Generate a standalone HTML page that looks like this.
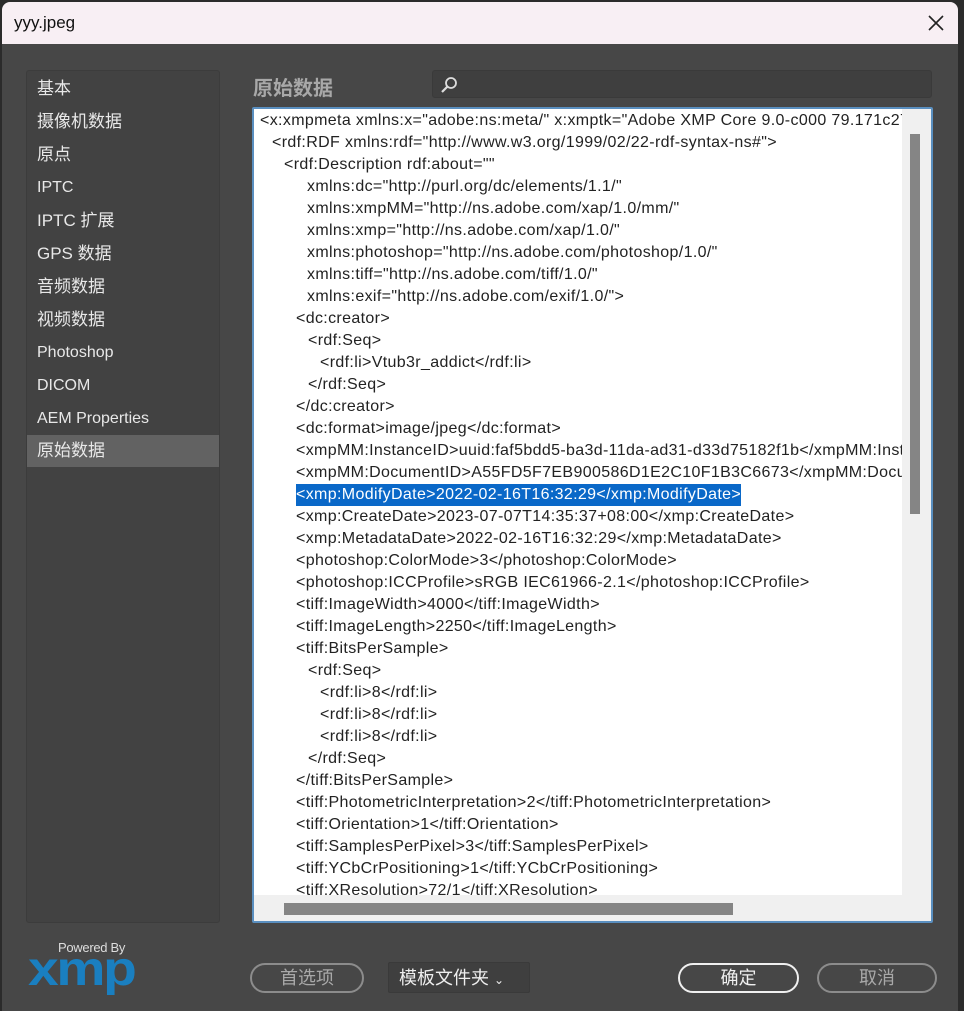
<!DOCTYPE html>
<html><head><meta charset="utf-8"><style>
*{margin:0;padding:0;box-sizing:border-box}
body{width:964px;height:1011px;background:#2b2b2b;font-family:"Liberation Sans","Noto Sans CJK SC",sans-serif;overflow:hidden;position:relative}
.win{position:absolute;left:2px;top:2px;width:956px;height:1009px;background:#474747;border-radius:8px 8px 0 0;overflow:hidden}
.title{position:absolute;left:0;top:0;width:956px;height:42px;background:#f8eff4;}
.title span{position:absolute;left:12px;top:11px;font-size:17px;color:#111}
.close{position:absolute;right:12px;top:11px;width:20px;height:20px}
.side{position:absolute;left:24px;top:68px;width:194px;height:853px;background:#424242;border:1px solid #3c3c3c;border-radius:3px}
.side div{position:absolute;left:0;width:192px;height:32px;line-height:32px;padding-left:10px;color:#e8e8e8;font-size:17px}
.side div.s{font-size:16px}
.side div.sel{background:#626262}
.hd{position:absolute;left:251px;top:70px;font-size:20px;color:#a8a8a8;font-weight:bold}
.search{position:absolute;left:430px;top:68px;width:500px;height:28px;background:#3f3f3f;border:1px solid #3a3a3a;border-radius:3px}
.ta{position:absolute;left:250px;top:105px;width:681px;height:816px;background:#f0f0f0;border:2px solid #5a8fc0;border-radius:2px;overflow:hidden}
.code{position:absolute;left:0;top:0;width:648px;height:786px;background:#fff;overflow:hidden}
.code p{position:absolute;white-space:pre;font-size:16px;letter-spacing:0.35px;color:#222;line-height:22px;height:22px}
.hl{background:#0a68c8;color:#fff!important}
.vs{position:absolute;left:656px;top:25px;width:10px;height:380px;background:#858585}
.hs{position:absolute;left:30px;top:794px;width:449px;height:12px;background:#858585}
.btn{position:absolute;top:961px;height:30px;border:2px solid #8c8c8c;border-radius:15px;color:#a8a8a8;font-size:18px;text-align:center;line-height:26px}
</style></head><body>
<div class="win">
<div class="title"><span>yyy.jpeg</span>
<svg class="close" viewBox="0 0 20 20"><path d="M3 3L17 17M17 3L3 17" stroke="#222" stroke-width="1.6"/></svg></div>
<div class="side">
<div style="top:2px">基本</div>
<div style="top:35px">摄像机数据</div>
<div style="top:68px">原点</div>
<div class="s" style="top:101px">IPTC</div>
<div style="top:134px">IPTC 扩展</div>
<div style="top:167px">GPS 数据</div>
<div style="top:200px">音频数据</div>
<div style="top:233px">视频数据</div>
<div class="s" style="top:266px">Photoshop</div>
<div class="s" style="top:299px">DICOM</div>
<div class="s" style="top:332px">AEM Properties</div>
<div class="sel" style="top:364px">原始数据</div>
</div>
<div class="hd">原始数据</div>
<div class="search"><svg style="position:absolute;left:6px;top:4px" width="20" height="20" viewBox="0 0 20 20"><circle cx="12" cy="8" r="5" fill="none" stroke="#ddd" stroke-width="1.8"/><path d="M8.5 11.5L3 17" stroke="#ddd" stroke-width="2.2"/></svg></div>
<div class="ta"><div class="code">
<p style="left:6px;top:1px">&lt;x:xmpmeta xmlns:x="adobe:ns:meta/" x:xmptk="Adobe XMP Core 9.0-c000 79.171c27f, 2022/08/16-18:02:43"&gt;</p>
<p style="left:18px;top:23px">&lt;rdf:RDF xmlns:rdf="http://www.w3.org/1999/02/22-rdf-syntax-ns#"&gt;</p>
<p style="left:30px;top:45px">&lt;rdf:Description rdf:about=""</p>
<p style="left:53px;top:67px">xmlns:dc="http://purl.org/dc/elements/1.1/"</p>
<p style="left:53px;top:89px">xmlns:xmpMM="http://ns.adobe.com/xap/1.0/mm/"</p>
<p style="left:53px;top:111px">xmlns:xmp="http://ns.adobe.com/xap/1.0/"</p>
<p style="left:53px;top:133px">xmlns:photoshop="http://ns.adobe.com/photoshop/1.0/"</p>
<p style="left:53px;top:155px">xmlns:tiff="http://ns.adobe.com/tiff/1.0/"</p>
<p style="left:53px;top:177px">xmlns:exif="http://ns.adobe.com/exif/1.0/"&gt;</p>
<p style="left:42px;top:199px">&lt;dc:creator&gt;</p>
<p style="left:54px;top:221px">&lt;rdf:Seq&gt;</p>
<p style="left:66px;top:243px">&lt;rdf:li&gt;Vtub3r_addict&lt;/rdf:li&gt;</p>
<p style="left:54px;top:265px">&lt;/rdf:Seq&gt;</p>
<p style="left:42px;top:287px">&lt;/dc:creator&gt;</p>
<p style="left:42px;top:309px">&lt;dc:format&gt;image/jpeg&lt;/dc:format&gt;</p>
<p style="left:42px;top:331px">&lt;xmpMM:InstanceID&gt;uuid:faf5bdd5-ba3d-11da-ad31-d33d75182f1b&lt;/xmpMM:InstanceID&gt;</p>
<p style="left:42px;top:353px">&lt;xmpMM:DocumentID&gt;A55FD5F7EB900586D1E2C10F1B3C6673&lt;/xmpMM:DocumentID&gt;</p>
<p class="hl" style="left:42px;top:375px">&lt;xmp:ModifyDate&gt;2022-02-16T16:32:29&lt;/xmp:ModifyDate&gt;</p>
<p style="left:42px;top:397px">&lt;xmp:CreateDate&gt;2023-07-07T14:35:37+08:00&lt;/xmp:CreateDate&gt;</p>
<p style="left:42px;top:419px">&lt;xmp:MetadataDate&gt;2022-02-16T16:32:29&lt;/xmp:MetadataDate&gt;</p>
<p style="left:42px;top:441px">&lt;photoshop:ColorMode&gt;3&lt;/photoshop:ColorMode&gt;</p>
<p style="left:42px;top:463px">&lt;photoshop:ICCProfile&gt;sRGB IEC61966-2.1&lt;/photoshop:ICCProfile&gt;</p>
<p style="left:42px;top:485px">&lt;tiff:ImageWidth&gt;4000&lt;/tiff:ImageWidth&gt;</p>
<p style="left:42px;top:507px">&lt;tiff:ImageLength&gt;2250&lt;/tiff:ImageLength&gt;</p>
<p style="left:42px;top:529px">&lt;tiff:BitsPerSample&gt;</p>
<p style="left:54px;top:551px">&lt;rdf:Seq&gt;</p>
<p style="left:66px;top:573px">&lt;rdf:li&gt;8&lt;/rdf:li&gt;</p>
<p style="left:66px;top:595px">&lt;rdf:li&gt;8&lt;/rdf:li&gt;</p>
<p style="left:66px;top:617px">&lt;rdf:li&gt;8&lt;/rdf:li&gt;</p>
<p style="left:54px;top:639px">&lt;/rdf:Seq&gt;</p>
<p style="left:42px;top:661px">&lt;/tiff:BitsPerSample&gt;</p>
<p style="left:42px;top:683px">&lt;tiff:PhotometricInterpretation&gt;2&lt;/tiff:PhotometricInterpretation&gt;</p>
<p style="left:42px;top:705px">&lt;tiff:Orientation&gt;1&lt;/tiff:Orientation&gt;</p>
<p style="left:42px;top:727px">&lt;tiff:SamplesPerPixel&gt;3&lt;/tiff:SamplesPerPixel&gt;</p>
<p style="left:42px;top:749px">&lt;tiff:YCbCrPositioning&gt;1&lt;/tiff:YCbCrPositioning&gt;</p>
<p style="left:42px;top:771px">&lt;tiff:XResolution&gt;72/1&lt;/tiff:XResolution&gt;</p>
</div>
<div class="vs"></div><div class="hs"></div>
</div>
<div style="position:absolute;left:56px;top:938px;font-size:13px;color:#ddd;letter-spacing:-0.3px">Powered By</div>
<div style="position:absolute;left:26px;top:940px;font-size:48px;font-weight:bold;color:#1a7fc0;letter-spacing:-2px;transform:scaleX(1.15);transform-origin:left">xmp</div>
<div class="btn" style="left:248px;width:114px">首选项</div>
<div style="position:absolute;left:386px;top:960px;width:142px;height:31px;background:#3f3f3f;border:1px solid #3a3a3a;border-radius:2px;color:#eee;font-size:18px;line-height:30px;padding-left:10px">模板文件夹 <span style="font-size:12px">&#8964;</span></div>
<div class="btn" style="left:676px;width:121px;border-color:#f0f0f0;color:#f0f0f0">确定</div>
<div class="btn" style="left:815px;width:120px">取消</div>
</div>
</body></html>
